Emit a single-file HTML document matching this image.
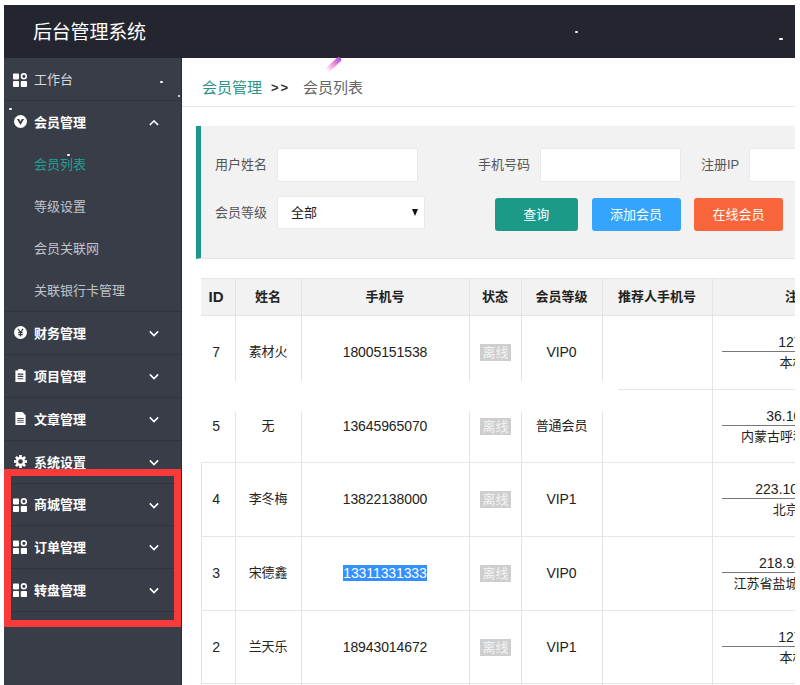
<!DOCTYPE html>
<html lang="zh-CN">
<head>
<meta charset="utf-8">
<title>后台管理系统</title>
<style>
*{box-sizing:border-box;margin:0;padding:0}
html,body{width:800px;height:685px;overflow:hidden;background:#fff}
body{position:relative;font-family:"Liberation Sans","Noto Sans CJK SC",sans-serif;font-size:13px;color:#333}
.abs{position:absolute}
#header{position:absolute;left:4px;top:5px;width:791px;height:53px;background:#23262e}
#header .logo{position:absolute;left:29px;top:0;height:53px;line-height:56px;font-size:19px;letter-spacing:-0.2px;color:#fff;white-space:nowrap}
#side{position:absolute;left:4px;top:58px;width:178px;height:627px;background:#383d48;overflow:hidden}
.nav{position:absolute;left:0;width:178px;height:43px;border-bottom:1px solid #30343f;color:#fff;font-size:13px;line-height:43px;white-space:nowrap}
.nav .t{position:absolute;left:30px;top:0;font-weight:bold}
.nav.plain .t{font-weight:normal;color:#d8d9db}
.nav svg.ic{position:absolute;left:10px;top:14px;width:13px;height:13px}
.nav svg.ic.g{left:9px;top:14px;width:14px;height:14px}
.nav svg.ar{position:absolute;left:145px;top:18px;width:10px;height:7px}
.sub{position:absolute;left:30px;height:42px;line-height:42px;font-size:13px;color:#c2c4c8;white-space:nowrap}
.sub.on{color:#1fa192}
#main{position:absolute;left:182px;top:58px;width:613px;height:627px;background:#fff;overflow:hidden}
#crumb{position:absolute;left:0;top:0;width:613px;height:49px;border-bottom:1px solid #e8e8e8;line-height:59px;font-size:15px;white-space:nowrap}
#crumb .a{position:absolute;left:20px;color:#2c9488}
#crumb .s{position:absolute;left:89px;color:#333;font-size:13px;letter-spacing:2px;font-weight:bold}
#crumb .b{position:absolute;left:121px;color:#666}
#quote{position:absolute;left:14px;top:68px;width:599px;height:133px;background:#f2f2f2;border-left:5px solid #1b9a8a;border-bottom:1px solid #e4e4e4}
.lb{position:absolute;font-size:13px;color:#555;white-space:nowrap;line-height:32px;height:32px}
.inp{position:absolute;height:33px;background:#fff;border:1px solid #e9e9e9;border-radius:2px}
.btn{position:absolute;height:33px;line-height:33px;text-align:center;color:#fff;font-size:13px;border-radius:3px;white-space:nowrap}
#tbl{position:absolute;left:19px;top:220px;width:594px;height:407px}
#thead{position:absolute;left:0;top:0;width:594px;height:38px;background:#f2f2f2;border-top:1px solid #e6e6e6;border-bottom:1px solid #e6e6e6}
.vl{position:absolute;top:0;width:1px;height:407px;background:#e4e4e4}
.hl{position:absolute;left:0;width:594px;height:1px;background:#e6e6e6}
.th{position:absolute;top:0;height:38px;line-height:38px;text-align:center;font-weight:bold;font-size:13px;color:#222;white-space:nowrap}
.td{position:absolute;height:20px;line-height:20px;text-align:center;font-size:14px;color:#222;white-space:nowrap;letter-spacing:-0.1px}
.td.cn{font-size:13px}
.tag{position:absolute;left:279px;width:31px;height:17px;line-height:17px;background:#cecece;color:#f4f4f4;font-size:13px;text-align:center;white-space:nowrap;overflow:hidden}
.ip{position:absolute;left:521px;width:200px;height:40px}
.ip .l1{position:absolute;left:0;top:0;width:200px;height:18px;line-height:17px;border-bottom:1px solid #777;font-size:14px;text-align:left;white-space:nowrap;color:#222}
.ip .l2{position:absolute;left:0;top:20px;width:200px;height:18px;line-height:18px;font-size:13px;text-align:left;white-space:nowrap;color:#222}
.sel{background:#3390ff;color:#fff}
.dot{position:absolute;width:3px;height:2px;background:#fff;border-radius:1px}
</style>
</head>
<body>
<div id="header"><div class="logo">后台管理系统</div></div>

<div id="side">
<div class="abs" id="navwrap" style="left:0;top:0;width:178px;height:626px">
  <div class="nav plain" style="top:0"><svg class="ic g" style="top:15px" viewBox="0 0 14 14"><rect x="0" y="0.6" width="6" height="5.8" rx="0.8" fill="#fff"/><rect x="0" y="8" width="6" height="6" rx="0.8" fill="#fff"/><rect x="7.8" y="8" width="6.2" height="6" rx="0.8" fill="#fff"/><circle cx="10.9" cy="3.3" r="2.4" fill="none" stroke="#fff" stroke-width="1.6"/></svg><span class="t">工作台</span></div>
  <div class="nav" style="top:43px;border-bottom:none"><svg class="ic" viewBox="0 0 14 14"><circle cx="7" cy="7" r="7" fill="#fff"/><path d="M3.2 4.3 L7 10.8 L10.8 4.3 L8.4 4.3 L7 7 L5.6 4.3 Z" fill="#383d48"/></svg><span class="t">会员管理</span><svg class="ar" viewBox="0 0 12 8"><path d="M1 7 L6 2 L11 7" fill="none" stroke="#fff" stroke-width="1.9"/></svg></div>
  <div class="sub on" style="top:86px">会员列表</div>
  <div class="sub" style="top:128px">等级设置</div>
  <div class="sub" style="top:170px">会员关联网</div>
  <div class="sub" style="top:212px">关联银行卡管理</div>
  <div class="hl" style="top:253px;width:178px;background:#30343f"></div>
  <div class="nav" style="top:254px"><svg class="ic" viewBox="0 0 14 14"><circle cx="7" cy="7" r="7" fill="#fff"/><path d="M4.3 3.2 L7 7 L9.7 3.2 M7 7 L7 11.2 M4.6 7.2 L9.4 7.2 M4.6 9.2 L9.4 9.2" fill="none" stroke="#383d48" stroke-width="1.3"/></svg><span class="t">财务管理</span><svg class="ar" viewBox="0 0 12 8"><path d="M1 1.5 L6 6.5 L11 1.5" fill="none" stroke="#fff" stroke-width="1.9"/></svg></div>
  <div class="nav" style="top:297px"><svg class="ic" viewBox="0 0 14 14"><path d="M1.5 1.5 H12.5 V14 H1.5 Z" fill="#fff"/><rect x="4.5" y="0" width="5" height="3" fill="#fff"/><path d="M4 5.5 H10 M4 8 H10 M4 10.5 H10" stroke="#383d48" stroke-width="1.2"/></svg><span class="t">项目管理</span><svg class="ar" viewBox="0 0 12 8"><path d="M1 1.5 L6 6.5 L11 1.5" fill="none" stroke="#fff" stroke-width="1.9"/></svg></div>
  <div class="nav" style="top:340px"><svg class="ic" viewBox="0 0 14 14"><path d="M1.5 0 H9 L12.5 3.5 V14 H1.5 Z" fill="#fff"/><path d="M3.5 7 H10.5 M3.5 9 H10.5 M3.5 11 H10.5" stroke="#383d48" stroke-width="0.9"/></svg><span class="t">文章管理</span><svg class="ar" viewBox="0 0 12 8"><path d="M1 1.5 L6 6.5 L11 1.5" fill="none" stroke="#fff" stroke-width="1.9"/></svg></div>
  <div class="nav" style="top:383px"><svg class="ic" viewBox="0 0 14 14"><g fill="#fff"><circle cx="7" cy="7" r="5"/><rect x="5.6" y="0" width="2.8" height="14"/><rect x="5.6" y="0" width="2.8" height="14" transform="rotate(45 7 7)"/><rect x="5.6" y="0" width="2.8" height="14" transform="rotate(90 7 7)"/><rect x="5.6" y="0" width="2.8" height="14" transform="rotate(135 7 7)"/></g><circle cx="7" cy="7" r="2.5" fill="#383d48"/></svg><span class="t">系统设置</span><svg class="ar" viewBox="0 0 12 8"><path d="M1 1.5 L6 6.5 L11 1.5" fill="none" stroke="#fff" stroke-width="1.9"/></svg></div>
  <div class="nav" style="top:426px;height:42px;line-height:42px"><svg class="ic g" viewBox="0 0 14 14"><rect x="0" y="0.6" width="6" height="5.8" rx="0.8" fill="#fff"/><rect x="0" y="8" width="6" height="6" rx="0.8" fill="#fff"/><rect x="7.8" y="8" width="6.2" height="6" rx="0.8" fill="#fff"/><circle cx="10.9" cy="3.3" r="2.4" fill="none" stroke="#fff" stroke-width="1.6"/></svg><span class="t">商城管理</span><svg class="ar" viewBox="0 0 12 8"><path d="M1 1.5 L6 6.5 L11 1.5" fill="none" stroke="#fff" stroke-width="1.9"/></svg></div>
  <div class="nav" style="top:468px"><svg class="ic g" viewBox="0 0 14 14"><rect x="0" y="0.6" width="6" height="5.8" rx="0.8" fill="#fff"/><rect x="0" y="8" width="6" height="6" rx="0.8" fill="#fff"/><rect x="7.8" y="8" width="6.2" height="6" rx="0.8" fill="#fff"/><circle cx="10.9" cy="3.3" r="2.4" fill="none" stroke="#fff" stroke-width="1.6"/></svg><span class="t">订单管理</span><svg class="ar" viewBox="0 0 12 8"><path d="M1 1.5 L6 6.5 L11 1.5" fill="none" stroke="#fff" stroke-width="1.9"/></svg></div>
  <div class="nav" style="top:511px"><svg class="ic g" viewBox="0 0 14 14"><rect x="0" y="0.6" width="6" height="5.8" rx="0.8" fill="#fff"/><rect x="0" y="8" width="6" height="6" rx="0.8" fill="#fff"/><rect x="7.8" y="8" width="6.2" height="6" rx="0.8" fill="#fff"/><circle cx="10.9" cy="3.3" r="2.4" fill="none" stroke="#fff" stroke-width="1.6"/></svg><span class="t">转盘管理</span><svg class="ar" viewBox="0 0 12 8"><path d="M1 1.5 L6 6.5 L11 1.5" fill="none" stroke="#fff" stroke-width="1.9"/></svg></div>
</div>
  <div class="abs" style="left:177px;top:0;width:1px;height:627px;background:#2a2e37"></div>
  <div class="abs" style="left:0;top:411px;width:177px;height:158px;border:7px solid #f93a3a"></div>
</div>

<div id="main">
  <div id="crumb"><span class="a">会员管理</span><span class="s">&gt;&gt;</span><span class="b">会员列表</span></div>
  <div id="quote">
    <div class="lb" style="left:14px;top:23px">用户姓名</div>
    <div class="inp" style="left:76px;top:22px;width:141px;height:34px"></div>
    <div class="lb" style="left:277px;top:23px">手机号码</div>
    <div class="inp" style="left:339px;top:22px;width:141px;height:34px"></div>
    <div class="lb" style="left:500px;top:23px">注册IP</div>
    <div class="inp" style="left:548px;top:22px;width:141px;height:34px"></div>
    <div class="lb" style="left:14px;top:71px">会员等级</div>
    <div class="inp" style="left:76px;top:70px;width:148px"><span class="abs" style="left:13px;top:0;line-height:31px;font-size:13px;color:#222">全部</span><span class="abs" style="left:134px;top:12px;width:0;height:0;border-left:3.5px solid transparent;border-right:3.5px solid transparent;border-top:7px solid #111"></span></div>
    <div class="btn" style="left:293.5px;top:72px;width:83.5px;background:#1b9a8a">查询</div>
    <div class="btn" style="left:390.5px;top:72px;width:89px;background:#35a4fc">添加会员</div>
    <div class="btn" style="left:493px;top:72px;width:89px;background:#f9653a">在线会员</div>
  </div>

  <div id="tbl">
    <div id="thead"></div>
    <div class="hl" style="top:111px"></div>
    <div class="hl" style="top:184px"></div>
    <div class="hl" style="top:258px"></div>
    <div class="hl" style="top:332px"></div>
    <div class="hl" style="top:405px"></div>
    <div class="vl" style="left:0;top:184px;height:223px"></div>
    <div class="vl" style="left:34px"></div>
    <div class="vl" style="left:100px"></div>
    <div class="vl" style="left:268px"></div>
    <div class="vl" style="left:320px"></div>
    <div class="vl" style="left:401px"></div>
    <div class="vl" style="left:511px"></div>

    <div class="th" style="left:0;width:30px;font-size:15px">ID</div>
    <div class="th" style="left:34px;width:66px">姓名</div>
    <div class="th" style="left:100px;width:168px">手机号</div>
    <div class="th" style="left:268px;width:52px">状态</div>
    <div class="th" style="left:320px;width:81px">会员等级</div>
    <div class="th" style="left:401px;width:110px">推荐人手机号</div>
    <div class="th" style="left:584px;text-align:left">注册IP</div>

    <!-- row 1 -->
    <div class="td" style="left:0;width:30px;top:64px">7</div>
    <div class="td cn" style="left:34px;width:66px;top:64px">素材火</div>
    <div class="td" style="left:100px;width:168px;top:64px">18005151538</div>
    <div class="tag" style="top:66px">离线</div>
    <div class="td" style="left:320px;width:81px;top:64px">VIP0</div>
    <div class="ip" style="top:56px"><div class="l1" style="padding-left:56.2px">127.0.0.1</div><div class="l2" style="padding-left:57.5px">本机地址</div></div>
    <!-- row 2 -->
    <div class="td" style="left:0;width:30px;top:138px">5</div>
    <div class="td cn" style="left:34px;width:66px;top:138px">无</div>
    <div class="td" style="left:100px;width:168px;top:138px">13645965070</div>
    <div class="tag" style="top:140px">离线</div>
    <div class="td cn" style="left:320px;width:81px;top:138px">普通会员</div>
    <div class="ip" style="top:130px"><div class="l1" style="padding-left:44.2px">36.102.208.30</div><div class="l2" style="padding-left:19.1px">内蒙古呼和浩特市 电信</div></div>
    <!-- row 3 -->
    <div class="td" style="left:0;width:30px;top:211px">4</div>
    <div class="td cn" style="left:34px;width:66px;top:211px">李冬梅</div>
    <div class="td" style="left:100px;width:168px;top:211px">13822138000</div>
    <div class="tag" style="top:213px">离线</div>
    <div class="td" style="left:320px;width:81px;top:211px">VIP1</div>
    <div class="ip" style="top:203px"><div class="l1" style="padding-left:33.3px">223.104.108.115</div><div class="l2" style="padding-left:50.8px">北京市 移动</div></div>
    <!-- row 4 -->
    <div class="td" style="left:0;width:30px;top:285px">3</div>
    <div class="td cn" style="left:34px;width:66px;top:285px">宋德鑫</div>
    <div class="td" style="left:100px;width:168px;top:285px"><span class="sel">13311331333</span></div>
    <div class="tag" style="top:287px">离线</div>
    <div class="td" style="left:320px;width:81px;top:285px">VIP0</div>
    <div class="ip" style="top:277px"><div class="l1" style="padding-left:37.0px">218.92.226.104</div><div class="l2" style="padding-left:11.5px">江苏省盐城市东台市 电信</div></div>
    <!-- row 5 -->
    <div class="td" style="left:0;width:30px;top:359px">2</div>
    <div class="td cn" style="left:34px;width:66px;top:359px">兰天乐</div>
    <div class="td" style="left:100px;width:168px;top:359px">18943014672</div>
    <div class="tag" style="top:361px">离线</div>
    <div class="td" style="left:320px;width:81px;top:359px">VIP1</div>
    <div class="ip" style="top:351px"><div class="l1" style="padding-left:56.2px">127.0.0.1</div><div class="l2" style="padding-left:57.5px">本机地址</div></div>
  </div>
  <!-- white band (edit artefact) -->
  <div class="abs" style="left:-1px;top:323px;width:437px;height:31px;background:#fff"></div>
</div>
<!-- small artefact specks present in the screenshot -->
<div class="dot" style="left:575px;top:31px"></div>
<div class="dot" style="left:779px;top:38px;width:4px"></div>
<div class="dot" style="left:160px;top:81px"></div>
<div class="dot" style="left:178px;top:95px;width:2px"></div>
<div class="dot" style="left:9px;top:108px"></div>
<div class="dot" style="left:67px;top:154px"></div>
<div class="abs" style="left:324px;top:62px;width:19px;height:5px;transform:rotate(-43deg);border-radius:2px;background:linear-gradient(to right,rgba(255,200,230,0),#f08ad8 55%,#a050e0)"></div>
</body>
</html>
